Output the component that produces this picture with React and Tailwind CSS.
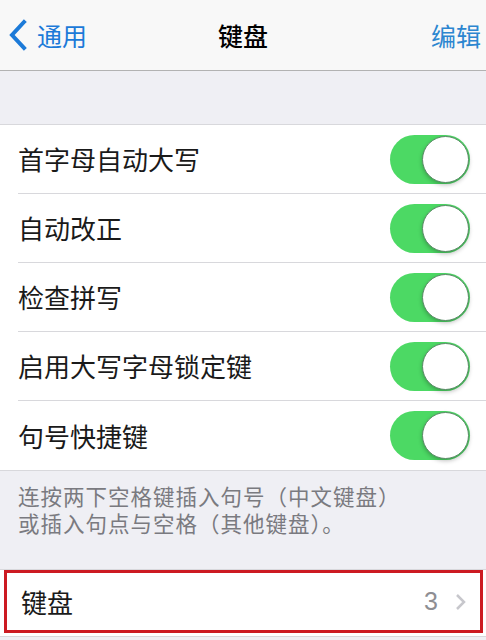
import React from 'react';

const font = { fontFamily: '"Noto Sans CJK SC", "Noto Sans", sans-serif' };

const Toggle = () => (
  <div className="relative w-[80px] h-[49px] rounded-full bg-[#4cd964]">
    <div className="absolute right-[1px] top-[1px] w-[47px] h-[47px] rounded-full bg-white border border-[#5a8a66] shadow-[0_2px_4px_rgba(0,0,0,0.25)]" />
  </div>
);

const settings = ['首字母自动大写', '自动改正', '检查拼写', '启用大写字母锁定键', '句号快捷键'];

export default function App() {
  return (
    <div className="w-[486px] h-[640px] overflow-hidden bg-[#efeff4]" style={font}>
      {/* Nav bar */}
      <div className="relative h-[71px] bg-[#f8f8f8] border-b border-[#b2b2b2] flex items-center">
        <div className="flex items-center pl-[8px] text-[#1c7ad8]">
          <svg width="20" height="32" viewBox="0 0 20 32" className="mr-[9px]">
            <path d="M16 3 L4 16 L16 29" fill="none" stroke="#1c7ad8" strokeWidth="4" strokeLinecap="square" />
          </svg>
          <span className="text-[25px] leading-none">通用</span>
        </div>
        <div className="absolute left-0 right-0 text-center text-[25px] leading-none font-medium text-black pointer-events-none">
          键盘
        </div>
        <div className="ml-auto pr-[5px] text-[25px] leading-none text-[#2c86d0]">编辑</div>
      </div>

      <div className="h-[53px]" />

      {/* Toggles */}
      <div className="bg-white border-y border-[#d8d8dc]">
        {settings.map((label, i) => (
          <div key={i} className="pl-[18px]">
            <div className={`h-[69px] flex items-center pr-[16px] ${i < settings.length - 1 ? 'border-b border-[#d8d8dc]' : ''}`}>
              <span className="text-[26px] text-[#1a1a1a] leading-none">{label}</span>
              <div className="ml-auto">
                <Toggle />
              </div>
            </div>
          </div>
        ))}
      </div>

      <div className="px-[18px] pt-[11px] text-[21.5px] leading-[27px] tracking-[1px] text-[#7a7a80]">
        <p>连按两下空格键插入句号（中文键盘）</p>
        <p>或插入句点与空格（其他键盘）。</p>
      </div>

      <div className="h-[33px]" />

      {/* Keyboard row */}
      <div className="bg-white border-y border-[#d8d8dc] h-[68px] pl-[4px] pr-[3px]">
        <div className="h-[63px] border-[3px] border-[#cc1a22] flex items-center pl-[14px] pr-[14px]">
          <span className="text-[26px] text-[#1a1a1a] leading-none">键盘</span>
          <span className="ml-auto text-[25px] text-[#8e8e93] leading-none mr-[17px]" style={{ fontFamily: '"Liberation Sans", sans-serif' }}>3</span>
          <svg width="11" height="18" viewBox="0 0 11 18">
            <path d="M2 2 L9 9 L2 16" fill="none" stroke="#c7c7cc" strokeWidth="2.5" />
          </svg>
        </div>
      </div>
    </div>
  );
}
